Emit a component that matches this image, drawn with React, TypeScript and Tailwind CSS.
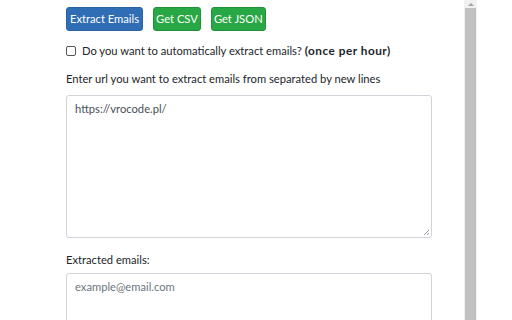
import React from 'react'

const font = { fontFamily: 'Lato, "Open Sans", sans-serif' }

function Scrollbar() {
  return (
    <div className="flex w-[13px] shrink-0 flex-col bg-[#f1f1f1]">
      <div className="flex h-[8px] items-center justify-center">
        <div className="h-0 w-0 border-x-[3px] border-b-[3px] border-x-transparent border-b-[#a3a3a3]" />
      </div>
      <div className="mx-[1px] flex-1 bg-[#c1c1c1]" />
    </div>
  )
}

export default function App() {
  return (
    <div className="flex h-[320px] w-[512px] overflow-hidden bg-white text-[11.2px] text-[#212529]" style={font}>
      <div className="flex w-[464px] shrink-0 flex-col pl-[66px] pr-[32px] pt-[7px]">
        <div className="flex shrink-0 gap-[10px]">
          <button className="h-[24px] rounded-[3px] border border-[#2a62a3] bg-[#2f6db5] px-[3px] text-[11.2px] text-white">
            Extract Emails
          </button>
          <button className="h-[24px] rounded-[3px] border border-[#1f9137] bg-[#28a745] px-[2px] text-[11.2px] text-white">
            Get CSV
          </button>
          <button className="h-[24px] rounded-[3px] border border-[#1f9137] bg-[#28a745] px-[2px] text-[11.2px] text-white">
            Get JSON
          </button>
        </div>
        <label className="mt-[11px] flex shrink-0 items-center gap-[6px] leading-[18px]">
          <span className="h-[10px] w-[10px] rounded-[2px] border border-[#555] bg-white" />
          <span>
            Do you want to automatically extract emails?{' '}
            <b className="text-[11.8px] tracking-[0.5px]">(once per hour)</b>
          </span>
        </label>
        <div className="mt-[10px] shrink-0 leading-[18px]">
          Enter url you want to extract emails from separated by new lines
        </div>
        <div className="relative mt-[7px] h-[143px] w-[366px] shrink-0 rounded-[3px] border border-[#ced4da] px-[8px] py-[5px] text-[#495057]">
          https://vrocode.pl/
          <svg className="absolute bottom-[1px] right-[1px]" width="7" height="7" viewBox="0 0 7 7">
            <path d="M6 1L1 6M6 4L4 6" stroke="#999" strokeWidth="1" />
          </svg>
        </div>
        <div className="mt-[13px] shrink-0 leading-[18px]">Extracted emails:</div>
        <div className="mt-[4px] h-[60px] w-[366px] shrink-0 rounded-[3px] border border-[#ced4da] px-[8px] py-[5px] text-[#6c757d]">
          example@email.com
        </div>
      </div>
      <Scrollbar />
      <div className="flex-1" />
    </div>
  )
}
